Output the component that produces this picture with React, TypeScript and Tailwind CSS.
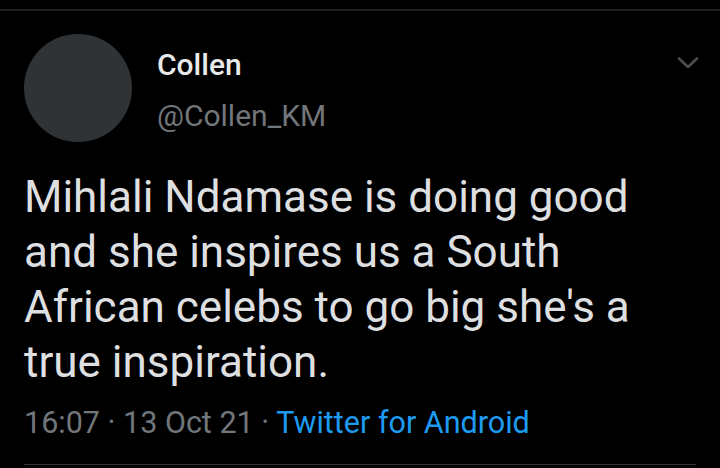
export default function App() {
  return (
    <div className="w-[720px] h-[468px] bg-black overflow-hidden" style={{ fontFamily: "Roboto, 'Noto Sans', sans-serif" }}>
      <div className="pt-[9px]">
        <div className="border-t-2 border-[#1c1e20]" />
      </div>
      <div className="flex pl-[24px] pr-[21px] pt-[23px]">
        <div className="w-[108px] h-[108px] rounded-full bg-[#2f3336] shrink-0" />
        <div className="ml-[25px] flex-1 pt-[13px]">
          <div className="text-[30px] leading-[36px] font-medium text-[#e7e9ea]">Collen</div>
          <div className="text-[30px] leading-[36px] text-[#71767b] mt-[15px]">@Collen_KM</div>
        </div>
        <div className="pt-[22px]">
          <svg width="22" height="14" viewBox="0 0 22 14" fill="none">
            <path d="M2 2.5 L11 11 L20 2.5" stroke="#4a4e52" strokeWidth="2.6" strokeLinecap="round" strokeLinejoin="round" />
          </svg>
        </div>
      </div>
      <div className="px-[24px] mt-[28px]">
        <p className="text-[44px] leading-[55px] text-[#dedfe0] w-[660px]">
          Mihlali Ndamase is doing good and she inspires us a South African celebs to go big she's a true inspiration.
        </p>
        <div className="mt-[13px] text-[30.5px] leading-[40px] text-[#71767b]">
          16:07 · 13 Oct 21 · <span className="text-[#1d9bf0]">Twitter for Android</span>
        </div>
      </div>
      <div className="px-[24px] mt-[21px]">
        <div className="border-t border-[#2f3336]" />
      </div>
    </div>
  )
}
